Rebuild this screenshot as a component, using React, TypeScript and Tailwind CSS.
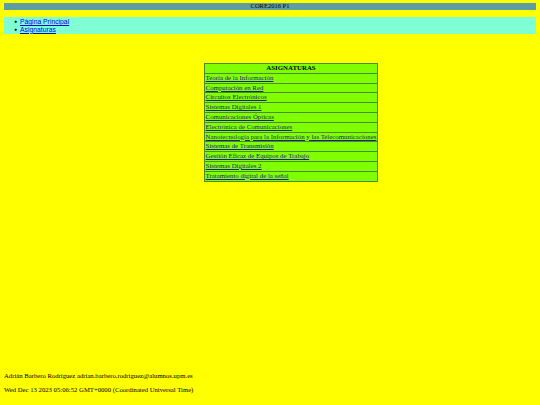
import React from 'react';

const asignaturas = [
  'Teoría de la Información',
  'Computación en Red',
  'Circuitos Electrónicos',
  'Sistemas Digitales 1',
  'Comunicaciones Ópticas',
  'Electrónica de Comunicaciones',
  'Nanotecnología para la Información y las Telecomunicaciones',
  'Sistemas de Transmisión',
  'Gestión Eficaz de Equipos de Trabajo',
  'Sistemas Digitales 2',
  'Tratamiento digital de la señal',
];

const enlaces = ['Página Principal', 'Asignaturas'];

export default function App() {
  return (
    <div className="min-h-[405px] w-[540px] bg-[#ffff00] px-[4px] pt-[3px] flex flex-col font-['Liberation_Serif',serif] text-black">
      <div className="h-[7px] bg-[#5f9ea0] flex items-center justify-center text-[6.5px] leading-none">
        CORE2016 P1
      </div>

      <ul className="mt-[7px] bg-[#7fffd4] py-[1px] pl-[10px] text-[6.8px] leading-[7.5px] font-['Liberation_Sans',sans-serif]">
        {enlaces.map((e) => (
          <li key={e} className="flex items-center gap-[3px]">
            <span className="text-[5px]">●</span>
            <a href="#" className="text-[#0000ee] underline">{e}</a>
          </li>
        ))}
      </ul>

      <div className="mt-[29px] flex justify-center">
        <table className="ml-[42px] border-collapse border border-[#1f2a0a] bg-[#7fff00] text-[6.85px] leading-[8.8px]">
          <thead>
            <tr>
              <th className="border border-[#4d8a2a] px-[1px] text-center font-bold">ASIGNATURAS</th>
            </tr>
          </thead>
          <tbody>
            {asignaturas.map((a) => (
              <tr key={a}>
                <td className="border border-[#4d8a2a] px-[1px] whitespace-nowrap">
                  <a href="#" className="text-[#1a237e] underline">{a}</a>
                </td>
              </tr>
            ))}
          </tbody>
        </table>
      </div>

      <div className="mt-auto pb-[8px] text-[6.7px] leading-[14px]">
        <p>Adrián Barbero Rodríguez adrian.barbero.rodriguez@alumnos.upm.es</p>
        <p>Wed Dec 13 2023 05:06:52 GMT+0000 (Coordinated Universal Time)</p>
      </div>
    </div>
  );
}
